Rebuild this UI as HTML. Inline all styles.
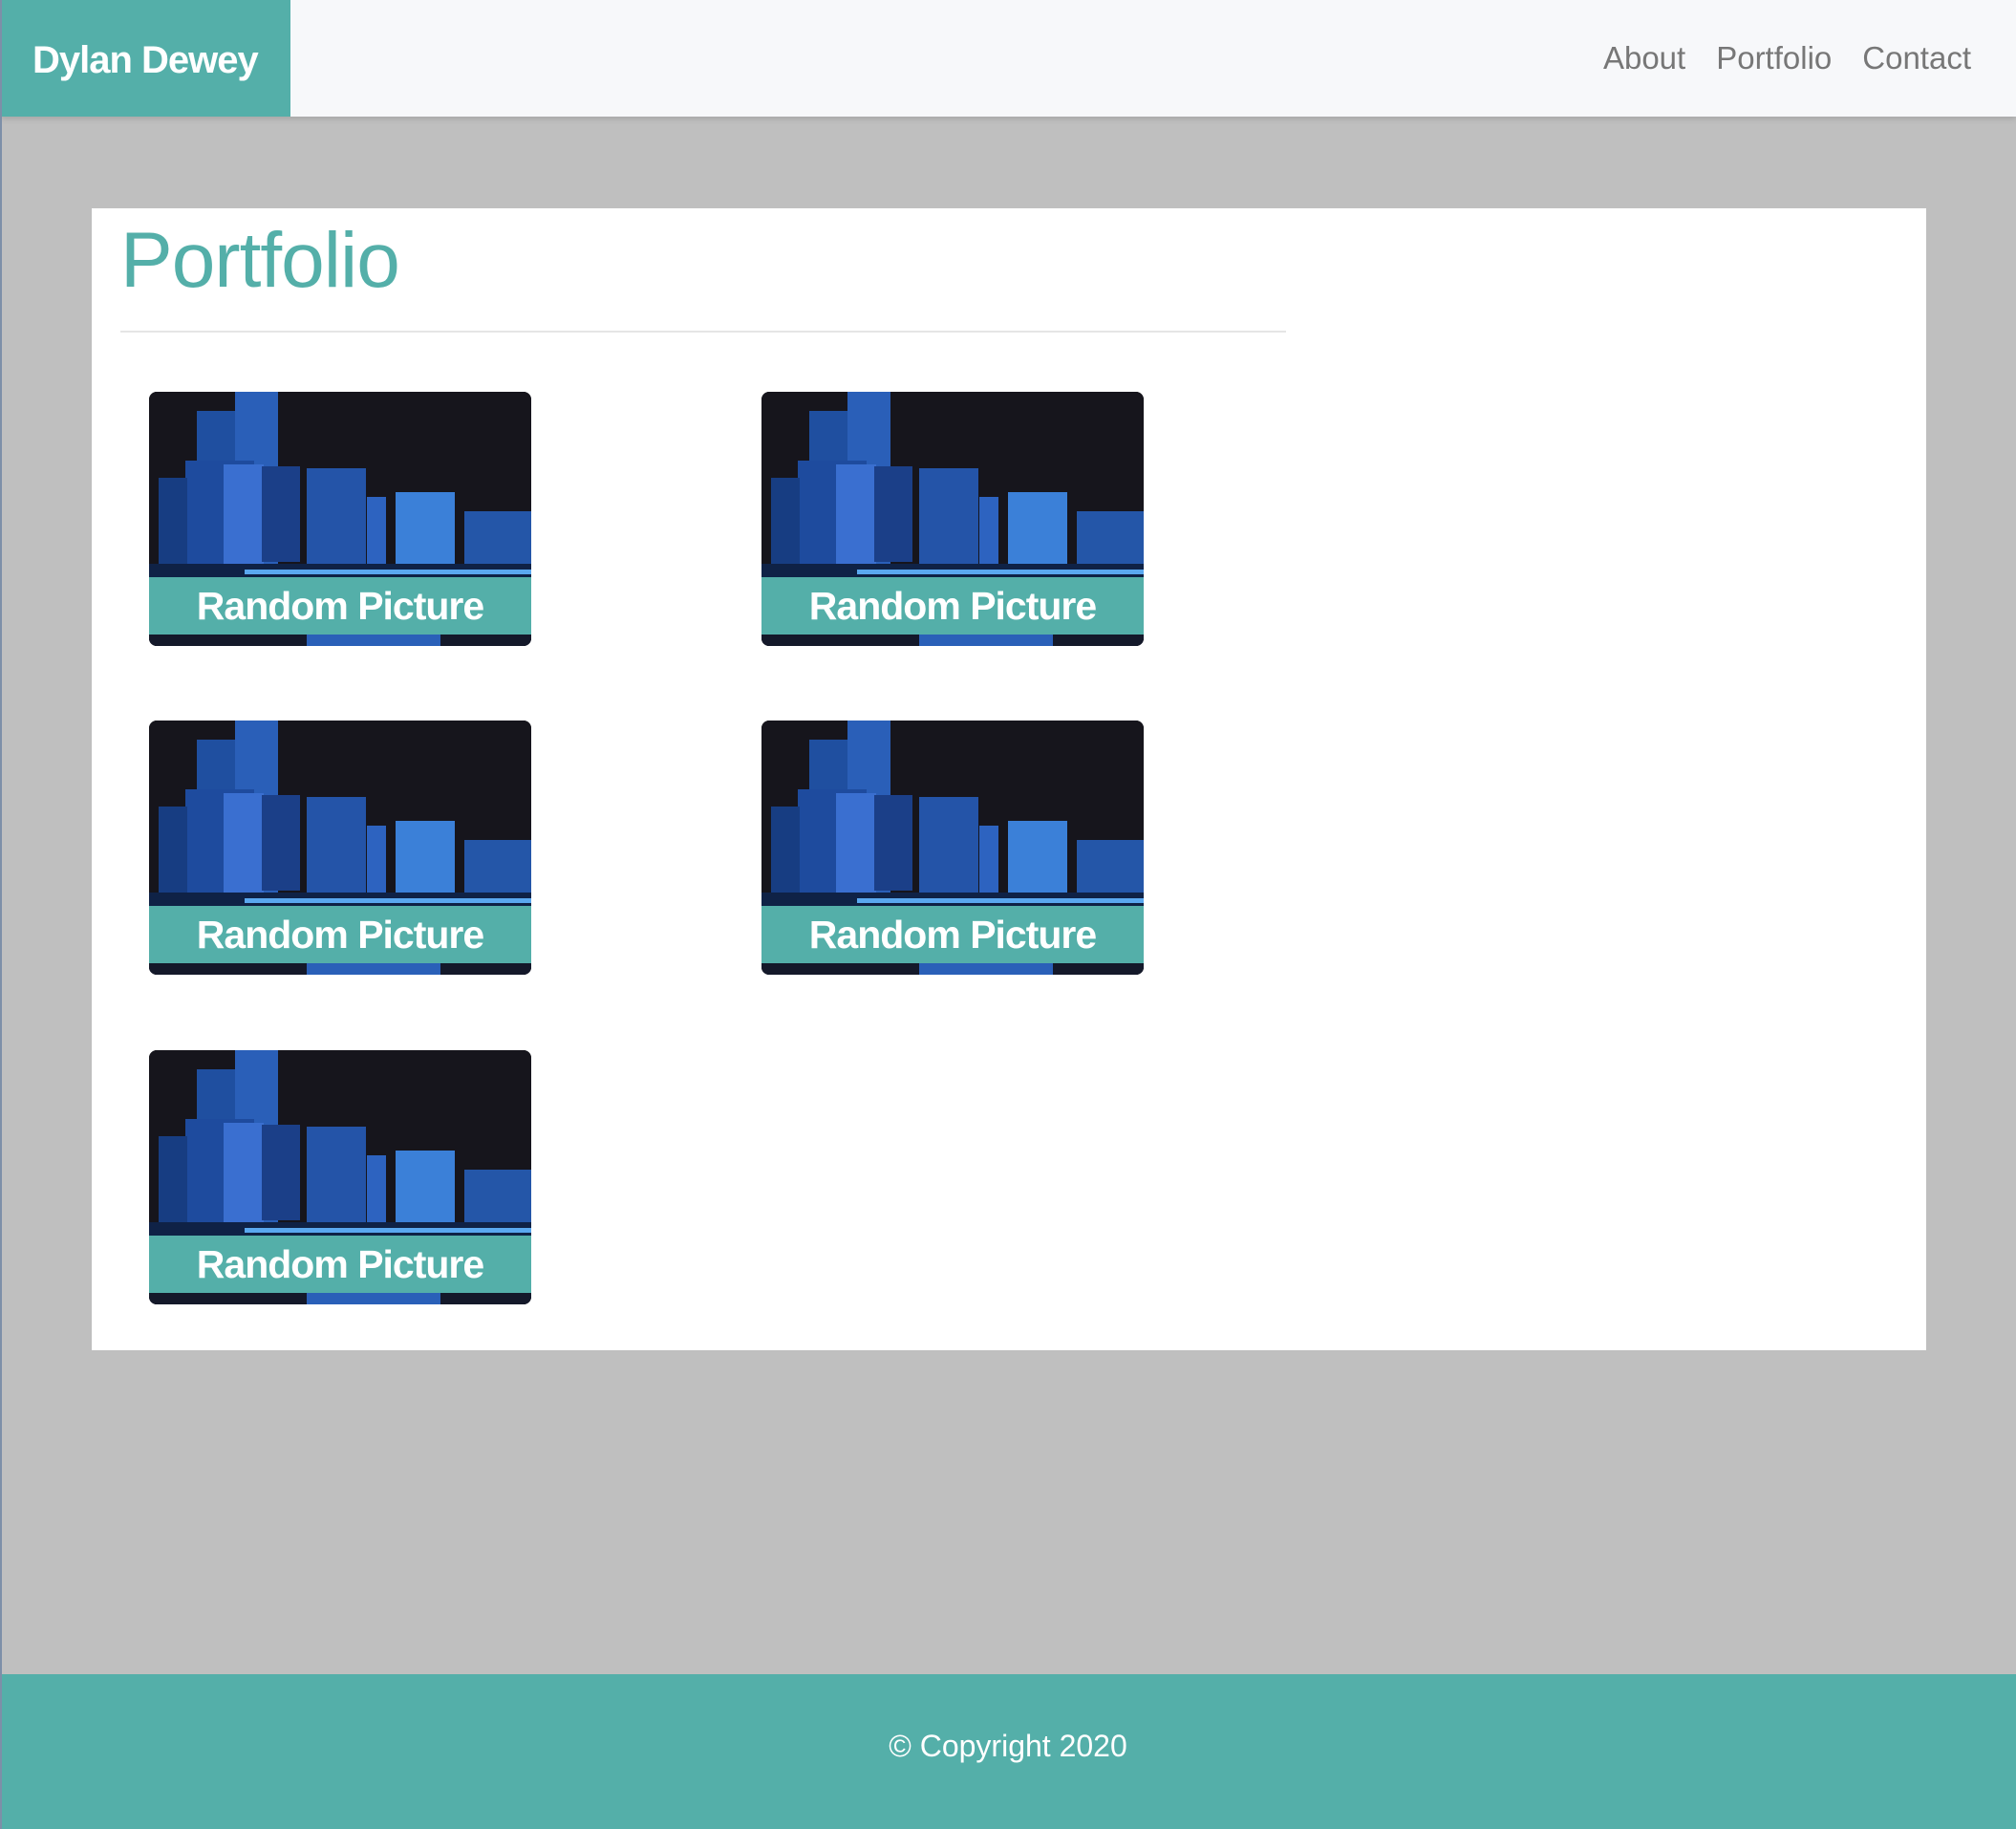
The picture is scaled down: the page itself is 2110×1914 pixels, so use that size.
<!DOCTYPE html>
<html><head><meta charset="utf-8"><style>
*{margin:0;padding:0;box-sizing:border-box}
html,body{width:2110px;height:1914px;overflow:hidden}
body{background:#bfbfbf;font-family:"Liberation Sans",sans-serif;position:relative}
.edge{position:absolute;left:0;top:0;width:2px;height:1914px;background:#7d8fa8;z-index:5}
.nav{position:absolute;left:0;top:0;width:2110px;height:122px;background:#f7f8fa;box-shadow:0 2px 6px rgba(0,0,0,.15)}
.brand{position:absolute;left:0;top:0;width:304px;height:122px;background:#54afa9;color:#fff;font-weight:bold;font-size:40px;line-height:126px;padding-left:34px;letter-spacing:-1px}
.links{position:absolute;right:47px;top:42px;font-size:33px;color:#777}
.links span{margin-left:32px}
.panel{position:absolute;left:96px;top:218px;width:1920px;height:1195px;background:#fff}
h1{position:absolute;left:30px;top:8px;font-size:82px;font-weight:normal;color:#54afa9;letter-spacing:-1px}
.hr{position:absolute;left:30px;top:128px;width:1220px;height:2px;background:#e5e5e5}
.card{position:absolute;width:400px;height:266px;border-radius:8px;overflow:hidden;background:#16151c}
.card svg{position:absolute;left:0;top:0}
.cap{position:absolute;left:0;top:194px;width:400px;height:60px;background:#54afa9;color:#fff;font-weight:bold;font-size:41px;text-align:center;line-height:60px;letter-spacing:-1px}
.foot{position:absolute;left:0;top:1752px;width:2110px;height:162px;background:#54afa9;color:#fff;font-size:32px;text-align:center;line-height:150px}
</style></head><body>
<div class="edge"></div>
<div class="nav"><div class="brand">Dylan Dewey</div><div class="links"><span>About</span><span>Portfolio</span><span>Contact</span></div></div>
<div class="panel"><h1>Portfolio</h1><div class="hr"></div></div>
<svg width="0" height="0" style="position:absolute"><defs>
<g id="city">
<rect width="400" height="266" fill="#16151c"/>
<rect x="50" y="20" width="55" height="60" fill="#1f4fa0"/>
<rect x="90" y="0" width="45" height="190" fill="#2a5fb8"/>
<rect x="38" y="72" width="72" height="115" fill="#1e4b9e"/>
<rect x="10" y="90" width="30" height="95" fill="#173d82"/>
<rect x="78" y="76" width="42" height="112" fill="#3a6fd0"/>
<rect x="118" y="78" width="40" height="100" fill="#1b3f88"/>
<rect x="165" y="80" width="62" height="100" fill="#2454a8"/>
<rect x="228" y="110" width="20" height="70" fill="#2d63c0"/>
<rect x="258" y="105" width="62" height="75" fill="#3b80d8"/>
<rect x="330" y="125" width="70" height="55" fill="#2456a8"/>
<rect x="0" y="180" width="400" height="14" fill="#0f2246"/>
<rect x="100" y="186" width="300" height="5" fill="#5aa8f0"/>
<rect x="0" y="254" width="400" height="12" fill="#14192a"/>
<rect x="165" y="254" width="140" height="12" fill="#2a60b8"/>
</g></defs></svg>
<div class="card" style="left:156px;top:410px"><svg width="400" height="266"><use href="#city"/></svg><div class="cap">Random Picture</div></div>
<div class="card" style="left:797px;top:410px"><svg width="400" height="266"><use href="#city"/></svg><div class="cap">Random Picture</div></div>
<div class="card" style="left:156px;top:754px"><svg width="400" height="266"><use href="#city"/></svg><div class="cap">Random Picture</div></div>
<div class="card" style="left:797px;top:754px"><svg width="400" height="266"><use href="#city"/></svg><div class="cap">Random Picture</div></div>
<div class="card" style="left:156px;top:1099px"><svg width="400" height="266"><use href="#city"/></svg><div class="cap">Random Picture</div></div>
<div class="foot">© Copyright 2020</div>
</body></html>
